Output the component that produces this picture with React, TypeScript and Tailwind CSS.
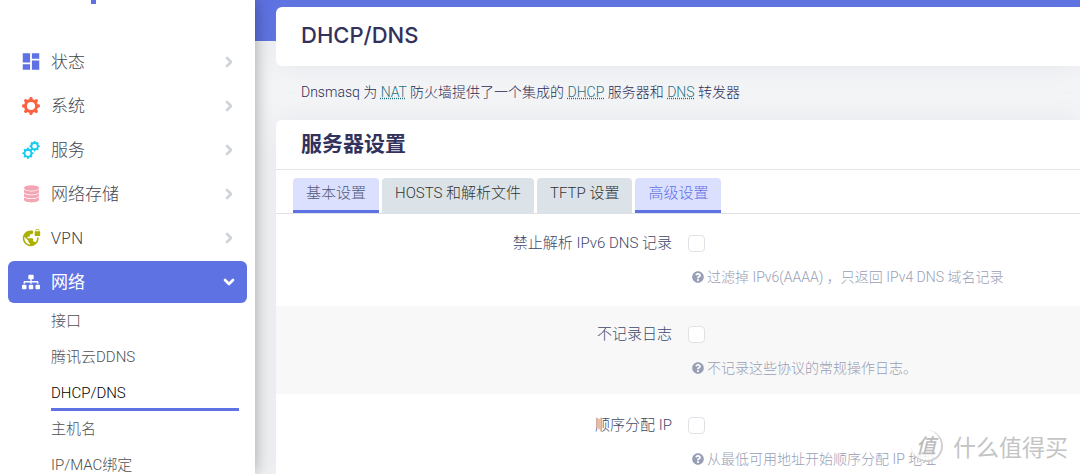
import type { ReactNode } from 'react';
import { ChevronDown, ChevronRight } from 'lucide-react';
import { FaQuestionCircle, FaSitemap } from 'react-icons/fa';
import { MdDashboard, MdVpnLock } from 'react-icons/md';

const TEETH = [0, 45, 90, 135, 180, 225, 270, 315];

function Gear({ cx, cy, r }: { cx: number; cy: number; r: number }) {
  return (
    <g transform={`translate(${cx} ${cy}) scale(${r / 10})`} fill="none" stroke="currentColor">
      <circle r="6.4" strokeWidth="3.4" />
      {TEETH.map(a => (
        <path key={a} d="M0 -7V-8.6" strokeWidth="3.8" strokeLinecap="round" transform={`rotate(${a})`} />
      ))}
    </g>
  );
}

function GearIcon() {
  return (
    <svg viewBox="0 0 20 20" className="size-[18px]">
      <Gear cx={10} cy={10} r={9.6} />
    </svg>
  );
}

function GearsIcon() {
  return (
    <svg viewBox="0 0 20 20" className="size-[18px]">
      <Gear cx={6.6} cy={13.6} r={6} />
      <Gear cx={14} cy={5.7} r={5.6} />
    </svg>
  );
}

function DatabaseIcon() {
  return (
    <svg viewBox="0 0 17 18" className="h-[18px] w-[17px]" fill="currentColor">
      <ellipse cx="8.5" cy="3" rx="7.5" ry="2.7" />
      <path d="M1 4.6c2 2.4 13 2.4 15 0v2.6c-1 3-14 3-15 0z" />
      <path d="M1 8.4c2 2.4 13 2.4 15 0v2.6c-1 3-14 3-15 0z" />
      <path d="M1 12.2c2 2.4 13 2.4 15 0v2.8c-1 3.2-14 3.2-15 0z" />
    </svg>
  );
}

const MENU: { label: string; icon: ReactNode; color: string }[] = [
  { label: '状态', icon: <MdDashboard size={23} />, color: 'text-[#5e72e4]' },
  { label: '系统', icon: <GearIcon />, color: 'text-[#fb6340]' },
  { label: '服务', icon: <GearsIcon />, color: 'text-[#11cdef]' },
  { label: '网络存储', icon: <DatabaseIcon />, color: 'text-[#f3a4b5]' },
  { label: 'VPN', icon: <MdVpnLock size={19} />, color: 'text-[#aab002]' },
];

const SUBMENU = ['接口', '腾讯云DDNS', 'DHCP/DNS', '主机名', 'IP/MAC绑定'];

const TABS = [
  { label: '基本设置', style: 'border-[#5e72e4] bg-[#dce0ff] text-[#525a7a]' },
  { label: 'HOSTS 和解析文件', style: 'border-[#dce3e8] bg-[#dce3e8] text-[#333]' },
  { label: 'TFTP 设置', style: 'border-[#dce3e8] bg-[#dce3e8] text-[#333]' },
  { label: '高级设置', style: 'border-[#5e72e4] bg-[#dce0ff] text-[#5e72e4]' },
];

const OPTIONS = [
  { id: 'filteraaaa', label: '禁止解析 IPv6 DNS 记录', help: '过滤掉 IPv6(AAAA) ，只返回 IPv4 DNS 域名记录' },
  { id: 'quietdhcp', label: '不记录日志', help: '不记录这些协议的常规操作日志。' },
  { id: 'sequential', label: '顺序分配 IP', help: '从最低可用地址开始顺序分配 IP 地址' },
];

function Term({ children }: { children: ReactNode }) {
  return <abbr className="text-[#1f7282] underline decoration-dotted underline-offset-1">{children}</abbr>;
}

function Sidebar() {
  return (
    <aside className="z-10 w-[255px] shrink-0 bg-white shadow-[0_0_16px_rgba(0,0,0,0.35)]">
      <div className="flex h-[41px] pl-[91px]">
        <span className="h-1 w-[5px] bg-[#5e72e4]" />
      </div>
      <nav className="px-2 font-['Noto_Sans','Noto_Sans_CJK_SC',sans-serif]">
        <ul className="flex flex-col gap-0.5">
          {MENU.map(item => (
            <li key={item.label}>
              <a href="#" className="flex h-[42px] items-center pr-2.5 pb-px pl-3 text-[17px] text-[#44454e]">
                <span className={`flex w-[22px] justify-center ${item.color}`}>{item.icon}</span>
                <span className="ml-[9px] flex-1 font-light">{item.label}</span>
                <ChevronRight size={16} strokeWidth={4} className="text-[#ced4da]" />
              </a>
            </li>
          ))}
          <li>
            <a href="#" className="flex h-[42px] items-center rounded-md bg-[#5e72e4] pr-2.5 pl-3 text-[17px] text-white">
              <span className="flex w-[22px] justify-center"><FaSitemap size={18} /></span>
              <span className="ml-[9px] flex-1">网络</span>
              <ChevronDown size={16} strokeWidth={4} />
            </a>
            <ul className="pr-2 pl-[43px] font-['Roboto','Noto_Sans_CJK_SC',sans-serif] text-[15px] font-light text-[#505050]">
              {SUBMENU.map(name => (
                <li key={name}>
                  <a
                    href="#"
                    className={`flex h-9 items-center border-b-3 pt-1 ${name === 'DHCP/DNS' ? 'border-[#5e72e4] text-black' : 'border-transparent'}`}
                  >
                    {name}
                  </a>
                </li>
              ))}
            </ul>
          </li>
        </ul>
      </nav>
    </aside>
  );
}

export default function App() {
  return (
    <div className="relative flex h-screen overflow-hidden bg-[#f4f5f7] font-['Roboto','Noto_Sans_CJK_SC',sans-serif]">
      <Sidebar />
      <main className="min-w-0 flex-1 bg-linear-to-b from-[#5e72e4] from-[41px] to-transparent to-[41px] pt-[7px] pl-[21px]">
        <header className="flex h-[59px] items-center rounded-l-md bg-white pb-0.5 pl-[25px] shadow-[0_0_32px_rgba(136,152,170,0.15)]">
          <h1 className="font-['Inter',sans-serif] text-[22px] font-medium text-[#32325d]">DHCP/DNS</h1>
        </header>

        <p className="flex h-[54px] items-center pb-px pl-[25px] text-[14px] font-light text-[#2c2c55]">
          <span>
            Dnsmasq 为 <Term>NAT</Term> 防火墙提供了一个集成的 <Term>DHCP</Term> 服务器和 <Term>DNS</Term> 转发器
          </span>
        </p>

        <section className="rounded-tl-md bg-white shadow-[0_0_32px_rgba(136,152,170,0.15)]">
          <h2 className="flex h-[50px] items-center border-b border-[#e3e5e8] pl-[25px] text-[21px] leading-none font-bold text-[#32325d]">
            服务器设置
          </h2>
          <div className="flex gap-[3px] border-b border-[#dee2e6] pt-2 pl-[17px]">
            {TABS.map(tab => (
              <button key={tab.label} type="button" className={`h-[35px] rounded-t border-b-3 px-[13px] pb-px text-[15px] font-light ${tab.style}`}>
                {tab.label}
              </button>
            ))}
          </div>
          <div className="flex flex-col gap-[3px] pt-px">
            {OPTIONS.map(opt => (
              <div key={opt.id} className="flex h-[88px] pt-4 even:bg-[#f8f8f8]">
                <label htmlFor={opt.id} className="w-[396px] shrink-0 text-right text-[15px] leading-6 font-light text-[#3d4a6b]">
                  {opt.label}
                </label>
                <div className="pl-4">
                  <div className="flex h-6 items-center">
                    <input
                      id={opt.id}
                      type="checkbox"
                      className="size-[17px] appearance-none rounded border border-[#dee2e6] bg-white checked:bg-[#5e72e4]"
                    />
                  </div>
                  <p className="mt-3 flex items-center gap-[3px] pl-1 text-[14px] leading-5 font-light text-[#989eb6]">
                    <FaQuestionCircle size={12} />
                    {opt.help}
                  </p>
                </div>
              </div>
            ))}
          </div>
        </section>
      </main>

      <div className="pointer-events-none absolute right-3 bottom-3 z-20 flex items-center gap-2.5 font-['Noto_Sans_CJK_SC',sans-serif] text-[#c4c4c4]">
        <span className="flex size-8 items-center justify-center rounded-full border-r-2 border-b-2 border-[#d0d0d0] bg-white/80 text-[20px] leading-none font-medium text-[#bbb] italic">
          值
        </span>
        <span className="text-[23px] leading-8">什么值得买</span>
      </div>
    </div>
  );
}
